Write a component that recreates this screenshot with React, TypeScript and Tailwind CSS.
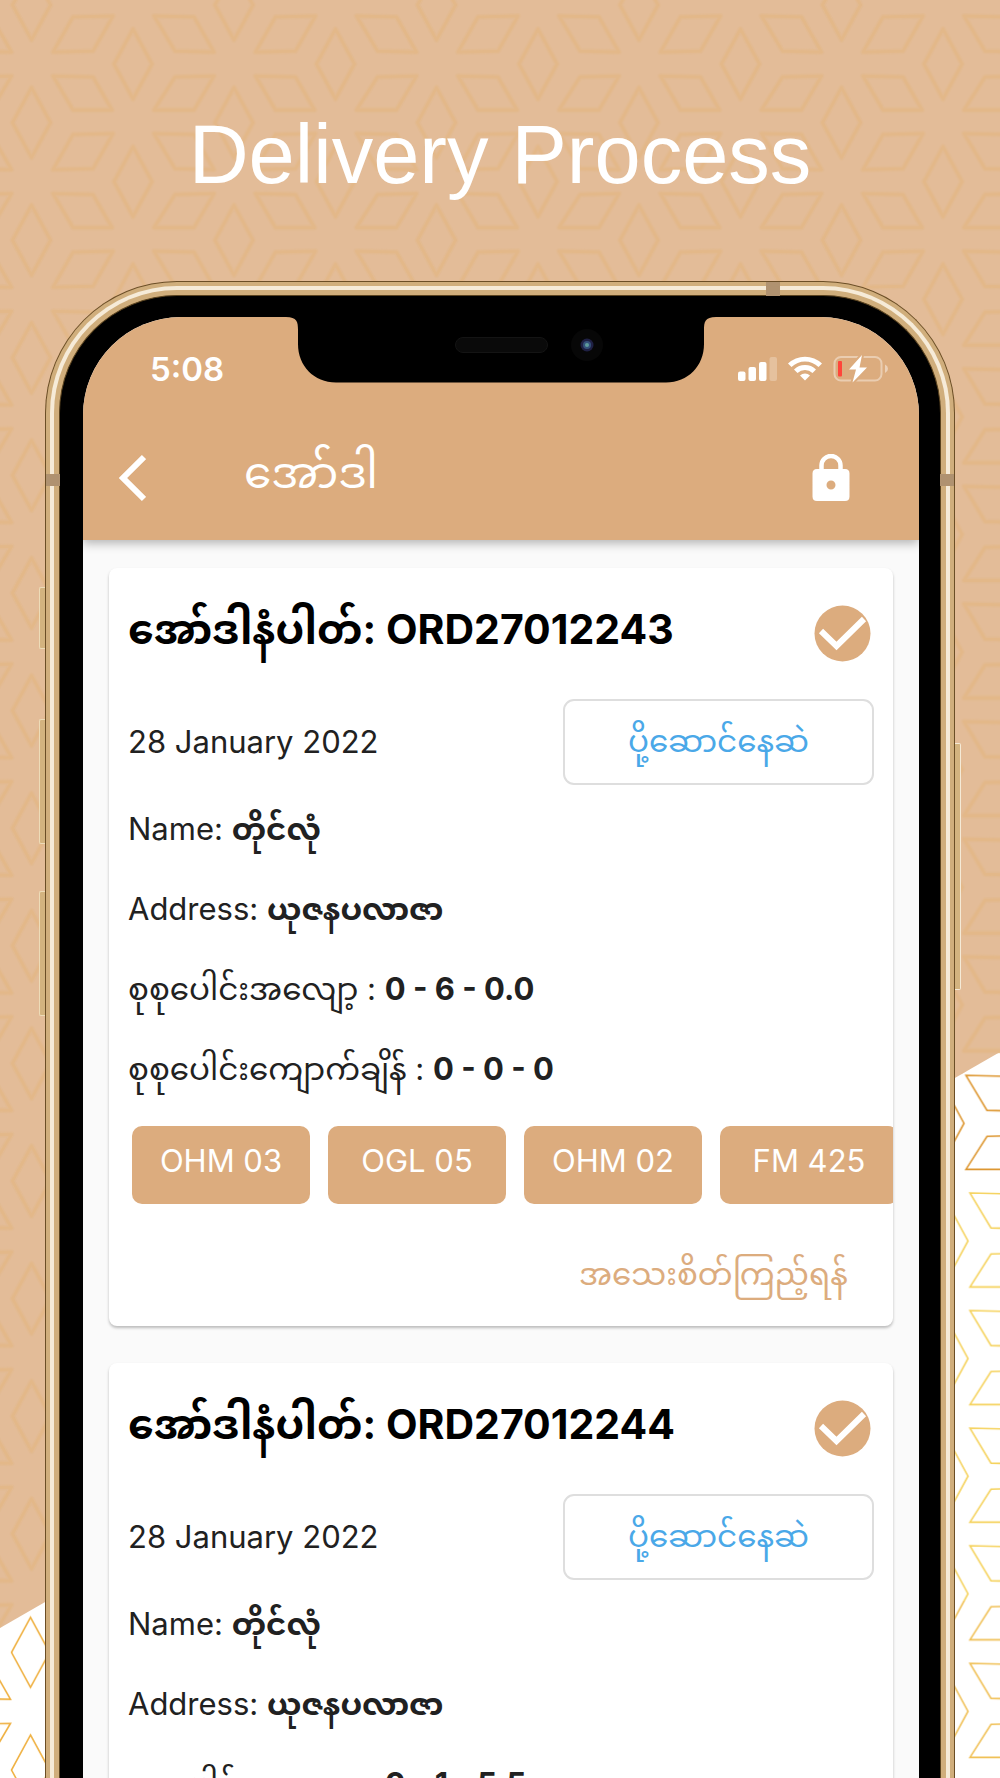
import React from "react";

type Order = {
    id: string;
    date: string;
    status: string;
    name: string;
    address: string;
    waste: string;
    weight: string;
    items: string[];
};

const orders: Order[] = [
    {
        id: "ORD27012243",
        date: "28 January 2022",
        status: "ပို့ဆောင်နေဆဲ",
        name: "တိုင်လုံ",
        address: "ယုဇနပလာဇာ",
        waste: "0 - 6 - 0.0",
        weight: "0 - 0 - 0",
        items: ["OHM 03", "OGL 05", "OHM 02", "FM 425"],
    },
    {
        id: "ORD27012244",
        date: "28 January 2022",
        status: "ပို့ဆောင်နေဆဲ",
        name: "တိုင်လုံ",
        address: "ယုဇနပလာဇာ",
        waste: "0 - 1 - 5.5",
        weight: "0 - 0 - 0",
        items: ["OHM 03", "OGL 05", "OHM 02", "FM 425"],
    },
];

// one tile of the star lattice: two rhombi and four slanted cells
const TILE =
    "M31.500 -30L50.500 5L31.500 40L12.500 5Z M31.500 87.600L50.500 122.600L31.500 157.600L12.500 122.600Z M133 29L152 64L133 99L114 64Z " +
    "M73 17L113 16L93 51L53 52Z M154 16L194 17L214 52L175 51Z M-48.500 16L-8.500 17L11.500 52L-27.500 51Z " +
    "M53 76L93 77L112 110L73 110Z M175 77L214 76L194 110L154 110Z M-27.500 77L11.500 76L-8.500 110L-48.500 110Z";

function Backdrop() {
    return (
        <svg className="absolute inset-0 w-full h-full" viewBox="0 0 1000 1778" preserveAspectRatio="xMidYMin slice" aria-hidden="true">
            <defs>
                <pattern id="soft" width="202.5" height="117.6" patternUnits="userSpaceOnUse">
                    <path d={TILE} fill="none" stroke="#e4b684" strokeWidth="6" strokeLinejoin="round" opacity="0.3" />
                    <path d={TILE} fill="none" stroke="#e4b57f" strokeWidth="3" strokeLinejoin="round" opacity="0.5" />
                </pattern>
                <pattern id="amber" width="202.5" height="117.6" patternUnits="userSpaceOnUse" patternTransform="translate(2 1)">
                    <path d={TILE} fill="none" stroke="#dd962f" strokeWidth="1.600" />
                </pattern>
                <pattern id="gold" width="202.5" height="117.6" patternUnits="userSpaceOnUse" patternTransform="translate(-1 1)">
                    <path d={TILE} fill="none" stroke="#efb040" strokeWidth="1.600" />
                </pattern>
                <pattern id="lemon" width="202.5" height="117.6" patternUnits="userSpaceOnUse" patternTransform="translate(6 1)">
                    <path d={TILE} fill="none" stroke="#f5d25c" strokeWidth="1.600" />
                </pattern>
                <pattern id="honey" width="202.5" height="117.6" patternUnits="userSpaceOnUse" patternTransform="translate(6 1)">
                    <path d={TILE} fill="none" stroke="#f0c055" strokeWidth="1.600" />
                </pattern>
            </defs>
            <rect width="1000" height="1778" fill="#fff" />
            <rect y="1600" width="500" height="178" fill="url(#gold)" />
            <rect x="500" y="1050" width="500" height="131" fill="url(#amber)" />
            <rect x="500" y="1181" width="500" height="420" fill="url(#lemon)" />
            <rect x="500" y="1601" width="500" height="177" fill="url(#honey)" />
            <path d="M0 0H1000V1052L0 1628Z" fill="#e3bc98" />
            <path d="M0 0H1000V1052L0 1628Z" fill="url(#soft)" />
        </svg>
    );
}

function Notch() {
    return (
        <svg className="absolute top-0 left-1/2 -translate-x-1/2" width="430" height="66" viewBox="0 0 430 66" aria-hidden="true">
            <path d="M0 0H430C419 0 418 5 418 13V27C418 49 402 65.500 380 65.500H50C28 65.500 12 49 12 27V13C12 5 11 0 0 0Z" fill="#000" />
            <rect x="169.500" y="20.500" width="92" height="15" rx="7.500" fill="#0a0a0a" stroke="#141414" />
            <circle cx="301" cy="28" r="16" fill="#070707" />
            <circle cx="301" cy="28" r="6.500" fill="#1f2044" />
            <circle cx="301" cy="28" r="4" fill="#34507a" />
            <circle cx="301" cy="28" r="2" fill="#5f9c9c" />
        </svg>
    );
}

function StatusIcons() {
    return (
        <svg width="150" height="28" viewBox="0 0 150 28" fill="#fff" aria-hidden="true">
            <rect x="0" y="16.500" width="7.500" height="9.500" rx="2" />
            <rect x="10.500" y="12" width="7.500" height="14" rx="2" />
            <rect x="21" y="7" width="7.500" height="19" rx="2" />
            <rect x="31.500" y="2" width="7.500" height="24" rx="2" opacity="0.25" />
            <path d="M50 8.500A24.500 24.500 0 0 1 84 8.500L80.500 12A19.500 19.500 0 0 0 53.500 12Z" />
            <path d="M56 14.500A16 16 0 0 1 78 14.500L74.500 18A11 11 0 0 0 59.500 18Z" />
            <path d="M62 20.500A7.500 7.500 0 0 1 72 20.500L67 25.500Z" />
            <rect x="96.500" y="2" width="47" height="23.500" rx="6.500" fill="none" stroke="#fff" strokeWidth="2" opacity="0.4" />
            <path d="M147 9.500Q150 11 150 13.800T147 18Z" opacity="0.45" />
            <rect x="100" y="6" width="4" height="15.500" rx="1" fill="#ff453a" />
            <path d="M124 0L111 14.500H118L114.500 27.500L129 12.500H121.500Z" stroke="#dcac7e" strokeWidth="4" paintOrder="stroke" strokeLinejoin="round" />
        </svg>
    );
}

function AppHeader() {
    return (
        <header className="relative z-10 bg-[#dcac7e] text-white shadow-[0_3px_10px_rgba(0,0,0,0.3)]">
            <div className="h-[104px] pl-[67px] pr-[31px] flex items-center justify-between">
                <span className="text-[33px] leading-10 font-semibold">5:08</span>
                <StatusIcons />
            </div>
            <div className="h-[119px] pb-1.5 pl-[35px] pr-[69px] flex items-center">
                <button type="button" aria-label="Back" className="w-7 h-12">
                    <svg width="28" height="48" viewBox="0 0 28 48" fill="none" stroke="#fff" strokeWidth="6">
                        <path d="M26 3L5 24L26 45" />
                    </svg>
                </button>
                <h2 className="ml-[98px] pb-3 flex-1 text-[44px] leading-[56px]">အော်ဒါ</h2>
                <button type="button" aria-label="Lock" className="w-[38px] h-12">
                    <svg width="38" height="48" viewBox="0 0 38 48" aria-hidden="true">
                        <path d="M9.500 17V11.500A9.500 9.500 0 0 1 28.500 11.500V17" fill="none" stroke="#fff" strokeWidth="4.500" />
                        <path fillRule="evenodd" fill="#fff" d="M5 15H33Q37.500 15 37.500 19.500V42.500Q37.500 47 33 47H5Q0.500 47 0.500 42.500V19.500Q0.500 15 5 15ZM19 26.500A4.500 4.500 0 1 0 19 35.500A4.500 4.500 0 1 0 19 26.500Z" />
                    </svg>
                </button>
            </div>
        </header>
    );
}

function OrderCard({ order }: { order: Order }) {
    return (
        <article className="shrink-0 pt-[33px] pb-[22px] rounded-lg bg-white overflow-hidden shadow-[0_2px_3px_rgba(0,0,0,0.25)] text-[31px] leading-20 text-[#212121]">
            <div className="h-16 pl-[19px] pr-[22px] flex items-center justify-between">
                <h3 className="pb-2 text-[41px] leading-[56px] font-bold text-black whitespace-nowrap">
                    အော်ဒါနံပါတ်: {order.id}
                </h3>
                <svg width="57" height="57" viewBox="0 0 57 57" aria-hidden="true">
                    <circle cx="28.500" cy="28.500" r="28" fill="#dcac7e" />
                    <path d="M7 26L22.500 41L50 14" fill="none" stroke="#fff" strokeWidth="6" />
                </svg>
            </div>
            <div className="mt-[34px] mb-1 px-[19px] h-[86px] flex items-center justify-between">
                <time>{order.date}</time>
                <div className="w-[311px] h-[86px] border-2 border-[#dedede] rounded-[11px] text-center text-[#4aa8e8]">
                    {order.status}
                </div>
            </div>
            <div className="px-[19px] whitespace-nowrap">
                <p>Name: <b>{order.name}</b></p>
                <p>Address: <b>{order.address}</b></p>
                <p>စုစုပေါင်းအလျော့ : <b>{order.waste}</b></p>
                <p>စုစုပေါင်းကျောက်ချိန် : <b>{order.weight}</b></p>
            </div>
            <div className="mt-[17px] pl-[23px] flex gap-[18px] overflow-hidden">
                {order.items.map((item) => (
                    <button type="button" key={item} className="w-[178px] h-[78px] pb-2 shrink-0 rounded-[10px] bg-[#dcac7e] text-white leading-[70px]">
                        {item}
                    </button>
                ))}
            </div>
            <div className="mt-10 pr-[45px] text-right leading-[60px]">
                <a href="#" className="text-[#dcac7e]">အသေးစိတ်ကြည့်ရန်</a>
            </div>
        </article>
    );
}

function Phone() {
    return (
        <div className="relative flex-1 min-h-0 mx-[45px] flex">
            <span className="absolute -left-1.5 top-[306px] w-1.5 h-[62px] bg-[#d3b37f] border border-r-0 border-[#eddcb8] rounded-l-xs" />
            <span className="absolute -left-1.5 top-[438px] w-1.5 h-[125px] bg-[#d3b37f] border border-r-0 border-[#eddcb8] rounded-l-xs" />
            <span className="absolute -left-1.5 top-[610px] w-1.5 h-[125px] bg-[#d3b37f] border border-r-0 border-[#eddcb8] rounded-l-xs" />
            <span className="absolute -right-1.5 top-[462px] w-1.5 h-[247px] bg-[#d3b37f] border border-l-0 border-[#f5ead6] rounded-r-xs" />
            <div className="flex-1 min-w-0 flex rounded-t-[132px] border border-b-0 border-[#6b4e26] bg-[#d0ae7c] pt-1 px-1">
                <div className="flex-1 min-w-0 flex rounded-t-[127px] border-4 border-b-0 border-[#f6ebd8] pt-[5px] px-[5px]">
                    <div className="flex-1 min-w-0 flex rounded-t-[118px] border border-b-0 border-[#5a431f] bg-black pt-[21px] pl-[23px] pr-[21px]">
                        <main className="relative flex-1 min-w-0 flex flex-col rounded-t-[98px] overflow-hidden bg-[#fafafa]">
                            <AppHeader />
                            <div className="flex-1 min-h-0 overflow-hidden flex flex-col gap-[37px] pt-7 px-[26px]">
                                {orders.map((order) => (
                                    <OrderCard key={order.id} order={order} />
                                ))}
                            </div>
                            <div className="absolute top-0 inset-x-0 z-20">
                                <Notch />
                            </div>
                        </main>
                    </div>
                </div>
            </div>
            <span className="absolute top-px right-[175px] w-3.5 h-3.5 bg-[#b09270]" />
            <span className="absolute top-[193px] left-px w-3.5 h-3 bg-[#b09270]" />
            <span className="absolute top-[193px] right-px w-3.5 h-3 bg-[#b09270]" />
        </div>
    );
}

export default function App() {
    return (
        <div className="relative h-screen overflow-hidden flex flex-col font-['Inter','Noto_Sans_Myanmar',sans-serif]">
            <Backdrop />
            <h1 className="relative h-[281px] pt-[105px] shrink-0 text-center text-white text-[83px] leading-[100px] font-['Liberation_Sans',sans-serif]">
                Delivery Process
            </h1>
            <Phone />
        </div>
    );
}
